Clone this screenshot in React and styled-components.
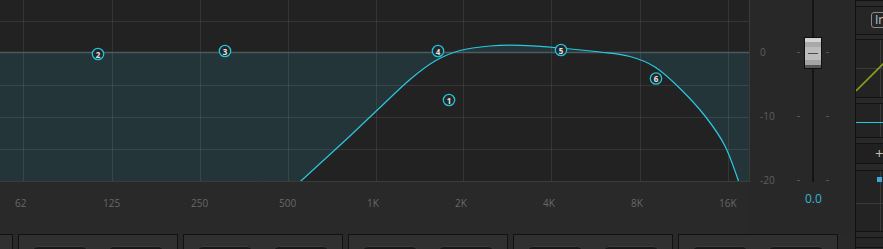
import React from 'react';
import styled, { createGlobalStyle } from 'styled-components';

const Global = createGlobalStyle`
  html, body { margin: 0; padding: 0; background: #292929; overflow: hidden; }
  body { font-family: "Open Sans", "Noto Sans", sans-serif; }
`;

const Root = styled.div`
  width: 883px;
  height: 249px;
  display: flex;
  overflow: hidden;
  background: #292929;
`;

const Main = styled.div`
  width: 855px;
  flex: none;
  display: flex;
  flex-direction: column;
`;

const TopRow = styled.div`
  display: flex;
  height: 234px;
  flex: none;
`;

const GraphCol = styled.div`
  width: 750px;
  flex: none;
  display: flex;
  flex-direction: column;
`;

const GraphSvg = styled.svg`
  display: block;
  width: 750px;
  height: 182px;
`;

const FreqRow = styled.div`
  display: flex;
  padding: 14px 0 0 15px;
`;

const FreqLabel = styled.span`
  width: 88px;
  flex: none;
  text-align: left;
  font-size: 10px;
  line-height: 14px;
  color: #686868;
`;

const FaderCol = styled.div`
  width: 105px;
  flex: none;
  display: flex;
  flex-direction: column;
  background: #282828;
`;

const ScaleArea = styled.div`
  position: relative;
  height: 182px;
  display: flex;
  flex-direction: column;
  gap: 50px;
  padding: 45px 0 0 10px;
  box-sizing: border-box;
`;

const ScaleRow = styled.div`
  display: grid;
  grid-template-columns: 37px 29px 10px;
  align-items: center;
  height: 14px;
`;

const ScaleLabel = styled.span`
  font-size: 10px;
  line-height: 14px;
  color: #5f5f5f;
`;

const Dash = styled.span`
  width: 3px;
  height: 1px;
  background: #575757;
`;

const Track = styled.div`
  position: absolute;
  left: 62px;
  top: 0;
  width: 2px;
  height: 182px;
  background: #141414;
`;

const Cap = styled.div`
  position: absolute;
  left: 54px;
  top: 37px;
  width: 18px;
  height: 32px;
  box-sizing: border-box;
  border: 1px solid #101010;
  background: linear-gradient(
    to bottom,
    #d3d3d3 0px, #d3d3d3 4px,
    #a9a9a9 4px, #a9a9a9 9px,
    #bcbcbc 9px, #bcbcbc 22px,
    #a4a4a4 22px, #a4a4a4 27px,
    #565656 27px
  );
  &::after {
    content: "";
    position: absolute;
    left: 3px;
    top: 15px;
    width: 10px;
    height: 1px;
    background: #4a4a4a;
  }
`;

const ValueRow = styled.div`
  padding: 9px 0 0 55px;
  font-size: 12px;
  line-height: 16px;
  color: #36b6d2;
`;

const PanelRow = styled.div`
  display: flex;
  gap: 5px;
  margin-left: -147px;
  height: 15px;
  overflow: hidden;
`;

const Panel = styled.div`
  width: 160px;
  height: 40px;
  flex: none;
  box-sizing: border-box;
  background: #303030;
  border: 1px solid #111;
  display: flex;
  gap: 20px;
  padding: 11px 0 0 13px;
`;

const Knob = styled.div`
  width: 56px;
  height: 20px;
  border-radius: 6px;
  background: #171717;
  box-shadow: inset 0 1px 0 #3c3c3c;
`;

const Strip = styled.div`
  width: 120px;
  flex: none;
  border-left: 1px solid #111;
  display: flex;
  flex-direction: column;
  background: #262626;
`;

const Band = styled.div`
  height: ${p => p.$h}px;
  flex: none;
  border-top: 1px solid #121212;
  border-bottom: 1px solid #121212;
  background: #292929;
`;

const StripSection = styled.div`
  height: ${p => p.$h}px;
  flex: none;
  background: ${p => p.$bg || '#262626'};
  position: relative;
  display: flex;
  align-items: ${p => p.$center ? 'center' : 'stretch'};
`;

const InButton = styled.div`
  margin: 5px 0 0 15px;
  height: 16px;
  box-sizing: border-box;
  padding: 0 3px;
  border: 1px solid #8a8a8a;
  border-radius: 3px;
  font-size: 12px;
  line-height: 14px;
  color: #c4c4c4;
  align-self: flex-start;
  white-space: nowrap;
`;

const PlusLabel = styled.span`
  margin-left: 19px;
  font-size: 15px;
  line-height: 19px;
  color: #bdbdbd;
`;

const MiniSvg = styled.svg`
  display: block;
  width: 120px;
  height: 100%;
`;

function curvePath(points) {
  let d = '';
  for (let i = 0; i < points.length - 1; i++) {
    const p0 = points[i - 1] || points[i];
    const p1 = points[i];
    const p2 = points[i + 1];
    const p3 = points[i + 2] || p2;
    const c1 = [p1[0] + (p2[0] - p0[0]) / 6, p1[1] + (p2[1] - p0[1]) / 6];
    const c2 = [p2[0] - (p3[0] - p1[0]) / 6, p2[1] - (p3[1] - p1[1]) / 6];
    d += ` C${c1[0].toFixed(2)},${c1[1].toFixed(2)} ${c2[0].toFixed(2)},${c2[1].toFixed(2)} ${p2[0]},${p2[1]}`;
  }
  return d;
}

const PTS = [
  [290, 191], [320, 163.5], [350, 136], [380, 107.5], [410, 79.5], [435, 61],
  [460, 50.5], [490, 46], [520, 45.4], [560, 48], [600, 52], [630, 56.5],
  [655, 67], [680, 88.5], [705, 116], [725, 146], [741, 188],
];

const VLINES = [23, 112, 200, 288, 376, 463, 551, 640, 728];
const HLINES = [21, 85, 117, 149];
const NODES = [
  { n: 1, x: 449, y: 100 },
  { n: 2, x: 98, y: 54 },
  { n: 3, x: 225, y: 51 },
  { n: 4, x: 438, y: 51 },
  { n: 5, x: 561, y: 50 },
  { n: 6, x: 656, y: 78.5 },
];
const FREQS = ['62', '125', '250', '500', '1K', '2K', '4K', '8K', '16K'];
const SCALE = ['0', '-10', '-20'];

function EqGraph() {
  const curve = curvePath(PTS);
  const line = `M${PTS[0][0]},${PTS[0][1]}` + curve;
  const fill = `M0,52 L0,200 L290,200 L290,191` + curve + ' L749,200 L749,52 Z';
  return (
    <GraphSvg viewBox="0 0 750 182">
      <rect x="0" y="0" width="749" height="181" fill="#222222" />
      <path d={fill} fill="#233539" />
      {VLINES.map(x => (
        <line key={x} x1={x + 0.5} y1="0" x2={x + 0.5} y2="181" stroke="rgba(255,255,255,0.09)" strokeWidth="1" />
      ))}
      {HLINES.map(y => (
        <line key={y} x1="0" y1={y + 0.5} x2="749" y2={y + 0.5} stroke="rgba(255,255,255,0.09)" strokeWidth="1" />
      ))}
      <line x1="0" y1="52.5" x2="749" y2="52.5" stroke="#4b5c60" strokeWidth="1.4" />
      <path d={line} fill="none" stroke="#2cc6df" strokeWidth="1.25" />
      <line x1="749.5" y1="0" x2="749.5" y2="182" stroke="#3b3b3b" strokeWidth="1" />
      <line x1="0" y1="181.5" x2="750" y2="181.5" stroke="#3b3b3b" strokeWidth="1" />
      {NODES.map(nd => (
        <g key={nd.n}>
          <circle cx={nd.x} cy={nd.y} r="5.7" fill="#262626" stroke="#22c3dd" strokeWidth="1.3" />
          <text
            x={nd.x}
            y={nd.y + 0.3}
            textAnchor="middle"
            dominantBaseline="central"
            fontSize="8"
            fontWeight="700"
            fill="#e4e4e4"
            fontFamily="'Open Sans', sans-serif"
          >
            {nd.n}
          </text>
        </g>
      ))}
    </GraphSvg>
  );
}

export default function App() {
  return (
    <>
      <Global />
      <Root>
        <Main>
          <TopRow>
            <GraphCol>
              <EqGraph />
              <FreqRow>
                {FREQS.map(f => <FreqLabel key={f}>{f}</FreqLabel>)}
              </FreqRow>
            </GraphCol>
            <FaderCol>
              <ScaleArea>
                <Track />
                <Cap />
                {SCALE.map(s => (
                  <ScaleRow key={s}>
                    <ScaleLabel>{s}</ScaleLabel>
                    <Dash />
                    <Dash />
                  </ScaleRow>
                ))}
              </ScaleArea>
              <ValueRow>0.0</ValueRow>
            </FaderCol>
          </TopRow>
          <PanelRow>
            {[0, 1, 2, 3, 4, 5].map(i => (
              <Panel key={i}>
                <Knob />
                <Knob />
              </Panel>
            ))}
          </PanelRow>
        </Main>
        <Strip>
          <Band $h={5} />
          <StripSection $h={27}>
            <InButton>In</InButton>
          </StripSection>
          <Band $h={4} />
          <StripSection $h={57} $bg="#232323">
            <MiniSvg viewBox="0 0 120 57">
              <line x1="24.5" y1="0" x2="24.5" y2="57" stroke="#3a3a3a" />
              <line x1="0" y1="28.5" x2="120" y2="28.5" stroke="#3a3a3a" />
              <line x1="0" y1="51" x2="51" y2="0" stroke="#8c9c1e" strokeWidth="1.6" />
            </MiniSvg>
          </StripSection>
          <Band $h={5} />
          <StripSection $h={33} $bg="#232323">
            <MiniSvg viewBox="0 0 120 33">
              <line x1="24.5" y1="0" x2="24.5" y2="33" stroke="#3a3a3a" />
              <line x1="0" y1="18.5" x2="120" y2="18.5" stroke="#2cc6df" strokeWidth="1.2" />
            </MiniSvg>
          </StripSection>
          <Band $h={5} />
          <StripSection $h={19} $bg="#202020" $center>
            <PlusLabel>+</PlusLabel>
          </StripSection>
          <Band $h={6} />
          <StripSection $h={60} $bg="#232323">
            <MiniSvg viewBox="0 0 120 60">
              <line x1="24.5" y1="0" x2="24.5" y2="60" stroke="#3a3a3a" />
              <line x1="0" y1="32.5" x2="120" y2="32.5" stroke="#3a3a3a" />
              <rect x="21" y="6" width="5" height="5" fill="#3aa6d6" />
            </MiniSvg>
          </StripSection>
          <Band $h={5} />
          <StripSection $h={9} />
          <Band $h={4} />
        </Strip>
      </Root>
    </>
  );
}
